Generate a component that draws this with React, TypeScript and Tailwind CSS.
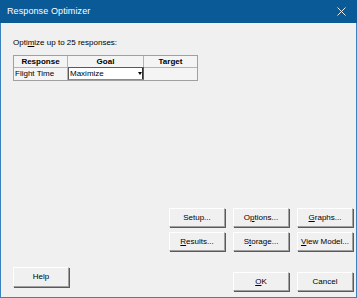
import React from "react";

function Btn({ children, className = "" }: { children: React.ReactNode; className?: string }) {
  return (
    <div
      className={
        "w-[56px] h-[19px] flex items-center justify-center bg-[#f0f0f0] border border-t-white border-l-white border-r-[#a0a0a0] border-b-[#a0a0a0] shadow-[1px_1px_0_#5a5a5a] text-[8px] leading-none text-black " +
        className
      }
    >
      {children}
    </div>
  );
}

export default function App() {
  return (
    <div className="w-[357px] h-[298px] flex flex-col font-['Liberation_Sans',Arial,sans-serif] text-black">
      <div className="h-[23px] shrink-0 bg-[#0b5a98] flex items-center justify-between pl-[7px] pr-[10px]">
        <span className="text-white text-[9px] leading-none tracking-[0.1px]">Response Optimizer</span>
        <svg width="9" height="9" viewBox="0 0 9 9" className="mr-[1px]">
          <path d="M0.5 0.5 L8.5 8.5 M8.5 0.5 L0.5 8.5" stroke="#e8eef5" strokeWidth="1" />
        </svg>
      </div>
      <div className="flex-1 flex flex-col bg-[#f0f0f0] border-x border-b border-[#3a82bd] pl-[12px] pr-[3px] pt-[15px] pb-[6px]">
        <div className="text-[8px] leading-[10px]">
          Opti<span className="underline">m</span>ize up to 25 responses:
        </div>
        <div className="mt-[7px] w-[185px] border border-[#a0a0a0] bg-[#f4f4f4] text-[8px] leading-none">
          <div className="flex h-[12px] border-b border-[#b4b4b4] font-bold">
            <div className="w-[54px] flex items-center justify-center border-r border-[#b4b4b4]">Response</div>
            <div className="w-[76px] flex items-center justify-center border-r border-[#b4b4b4]">Goal</div>
            <div className="flex-1 flex items-center justify-center">Target</div>
          </div>
          <div className="flex h-[12px]">
            <div className="w-[54px] flex items-center pl-[1px] border-r border-[#b4b4b4]">Flight Time</div>
            <div className="w-[76px] flex items-center bg-white border border-[#5a5a5a] border-b-[#8a8a8a] pl-[1px] -mt-[1px] h-[13px]">
              <span className="flex-1">Maximize</span>
              <div className="w-[6px] h-full flex items-center justify-center border-r border-[#303030]">
                <svg width="4" height="3" viewBox="0 0 4 3">
                  <path d="M0 0 H4 L2 3 Z" fill="#000" />
                </svg>
              </div>
            </div>
            <div className="flex-1" />
          </div>
        </div>
        <div className="flex-1" />
        <div className="self-end grid grid-cols-[56px_56px_56px] gap-x-[8px] gap-y-[5px]">
          <Btn>Setup...</Btn>
          <Btn>
            O<span className="underline">p</span>tions...
          </Btn>
          <Btn>
            <span className="underline">G</span>raphs...
          </Btn>
          <Btn>
            <span className="underline">R</span>esults...
          </Btn>
          <Btn>
            S<span className="underline">t</span>orage...
          </Btn>
          <Btn>
            <span className="underline">V</span>iew Model...
          </Btn>
        </div>
        <div className="mt-[16px] flex justify-between items-start">
          <Btn className="h-[20px]">Help</Btn>
          <div className="flex gap-[8px] mt-[5px]">
            <Btn>
              <span className="underline">O</span>K
            </Btn>
            <Btn>Cancel</Btn>
          </div>
        </div>
      </div>
    </div>
  );
}
